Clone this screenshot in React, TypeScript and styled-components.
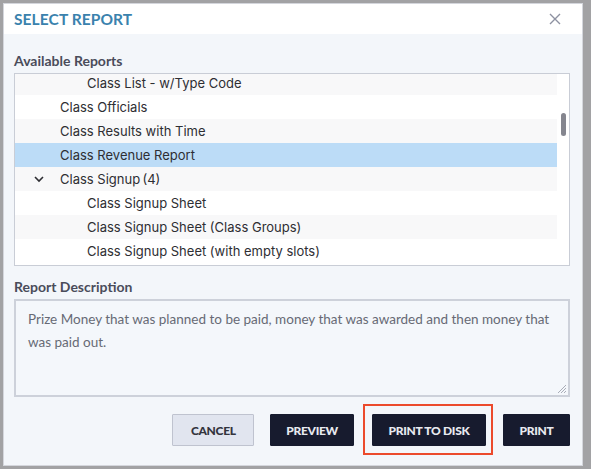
import React from "react";
import styled, { createGlobalStyle } from "styled-components";

const Global = createGlobalStyle`
  html, body { margin: 0; padding: 0; }
  body {
    background: #a2a2a4;
    width: 591px;
    height: 469px;
    overflow: hidden;
    font-family: Lato, "Noto Sans", sans-serif;
  }
`;

const Backdrop = styled.div`
  padding: 3px 8px 3px 3px;
  height: 469px;
  box-sizing: border-box;
`;

const Dialog = styled.div`
  width: 580px;
  height: 463px;
  box-sizing: border-box;
  background: #f3f6fa;
  border: 1px solid #d4d6dc;
  display: flex;
  flex-direction: column;
`;

const Header = styled.div`
  height: 30px;
  background: #ffffff;
  display: flex;
  align-items: center;
  justify-content: space-between;
  padding: 0 20px 0 10px;
  flex-shrink: 0;
`;

const Title = styled.h1`
  margin: 0;
  font-family: Lato, sans-serif;
  font-weight: 700;
  font-size: 15.5px;
  letter-spacing: 0.1px;
  color: #3a82ad;
  text-transform: uppercase;
`;

const CloseButton = styled.button`
  border: 0;
  background: transparent;
  padding: 0;
  width: 14px;
  height: 14px;
  display: flex;
  align-items: center;
  justify-content: center;
  cursor: pointer;
`;

const Body = styled.div`
  flex: 1;
  display: flex;
  flex-direction: column;
  padding: 17px 12px 0 10px;
`;

const SectionLabel = styled.div<{ $top?: number }>`
  font-family: Lato, sans-serif;
  font-weight: 700;
  font-size: 14px;
  line-height: 20px;
  color: #4a4c5a;
  margin-top: ${(p) => p.$top ?? 0}px;
  margin-bottom: 2px;
`;

const ListBox = styled.div`
  height: 193px;
  box-sizing: border-box;
  background: #ffffff;
  border: 1px solid #c9cdd6;
  position: relative;
  overflow: hidden;
  padding-right: 12px;
`;

const ListInner = styled.div`
  margin-top: -3px;
`;

const Row = styled.div<{ $indent: number; $stripe: boolean; $selected?: boolean }>`
  height: 24px;
  display: flex;
  align-items: center;
  padding-left: ${(p) => p.$indent}px;
  background: ${(p) => (p.$selected ? "#bcdcf7" : p.$stripe ? "#f8f8f9" : "#ffffff")};
  font-family: Inter, "Liberation Sans", sans-serif;
  font-size: 13px;
  color: #2e2e33;
  white-space: nowrap;
`;

const Chevron = styled.span`
  width: 26px;
  margin-left: -26px;
  display: flex;
  align-items: center;
  justify-content: flex-start;
`;

const ScrollThumb = styled.div`
  position: absolute;
  right: 3px;
  top: 39px;
  width: 5px;
  height: 23px;
  border-radius: 3px;
  background: #85868f;
`;

const DescBox = styled.div`
  height: 98px;
  box-sizing: border-box;
  border: 2px solid #cdd1da;
  background: #f4f7fb;
  padding: 7px 12px;
  position: relative;
  font-family: Lato, sans-serif;
  font-size: 13.5px;
  line-height: 23px;
  color: #676a75;
`;

const ResizeGrip = styled.span`
  position: absolute;
  right: 1px;
  bottom: 1px;
  width: 11px;
  height: 11px;
  display: flex;
`;

const Actions = styled.div`
  display: flex;
  justify-content: flex-end;
  align-items: center;
  margin-top: 17px;
  gap: 16px;
`;

const Button = styled.button<{ $variant: "light" | "dark"; $pad?: number }>`
  height: 32px;
  box-sizing: border-box;
  padding: 0 ${(p) => p.$pad ?? (p.$variant === "light" ? 17.5 : 15.5)}px;
  font-family: Lato, sans-serif;
  font-weight: 900;
  font-size: 12px;
  letter-spacing: -0.3px;
  text-transform: uppercase;
  cursor: pointer;
  border-radius: 1px;
  background: ${(p) => (p.$variant === "light" ? "#e1e5ef" : "#171b2e")};
  color: ${(p) => (p.$variant === "light" ? "#33343d" : "#e8eaf0")};
  border: 1px solid ${(p) => (p.$variant === "light" ? "#bfc3cf" : "#171b2e")};
`;

const Highlight = styled.div`
  position: relative;
  margin: 0 1px 0 2px;
  &::after {
    content: "";
    position: absolute;
    left: -9px;
    right: -7px;
    top: -10px;
    bottom: -9px;
    border: 2px solid #ec4a2c;
    pointer-events: none;
  }
`;

const rows = [
  { label: "Class List - w/Type Code", indent: 72 },
  { label: "Class Officials", indent: 45 },
  { label: "Class Results with Time", indent: 45 },
  { label: "Class Revenue Report", indent: 45, selected: true },
  { label: "Class Signup\u2009(4)", indent: 45, expanded: true },
  { label: "Class Signup Sheet", indent: 72 },
  { label: "Class Signup Sheet (Class Groups)", indent: 72 },
  { label: "Class Signup Sheet (with empty slots)", indent: 72 },
];

export default function App() {
  return (
    <>
      <Global />
      <Backdrop>
        <Dialog>
          <Header>
            <Title>Select Report</Title>
            <CloseButton aria-label="Close">
              <svg width="12" height="12" viewBox="0 0 12 12">
                <path d="M1 1 L11 11 M11 1 L1 11" stroke="#8d91a1" strokeWidth="1.4" fill="none" />
              </svg>
            </CloseButton>
          </Header>
          <Body>
            <SectionLabel>Available Reports</SectionLabel>
            <ListBox>
              <ListInner>
                {rows.map((r, i) => (
                  <Row key={r.label} $indent={r.indent} $stripe={i % 2 === 0} $selected={r.selected}>
                    {r.expanded && (
                      <Chevron>
                        <svg width="10" height="7" viewBox="0 0 10 7">
                          <path d="M1 1 L5 5 L9 1" stroke="#2e2e33" strokeWidth="1.6" fill="none" />
                        </svg>
                      </Chevron>
                    )}
                    {r.label}
                  </Row>
                ))}
              </ListInner>
              <ScrollThumb />
            </ListBox>
            <SectionLabel $top={11}>Report Description</SectionLabel>
            <DescBox>
              Prize Money that was planned to be paid, money that was awarded and then money that was paid out.
              <ResizeGrip>
                <svg width="11" height="11" viewBox="0 0 11 11">
                  <path d="M10 2 L2 10 M10 5 L5 10 M10 8 L8 10" stroke="#a9adb8" strokeWidth="1" fill="none" />
                </svg>
              </ResizeGrip>
            </DescBox>
            <Actions>
              <Button $variant="light">Cancel</Button>
              <Button $variant="dark" $pad={15}>Preview</Button>
              <Highlight>
                <Button $variant="dark">Print to Disk</Button>
              </Highlight>
              <Button $variant="dark">Print</Button>
            </Actions>
          </Body>
        </Dialog>
      </Backdrop>
    </>
  );
}
